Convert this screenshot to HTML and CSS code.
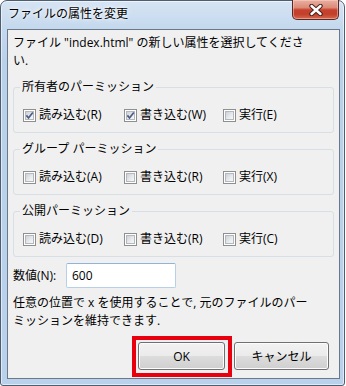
FILE: index.html
```html
<!DOCTYPE html>
<html lang="ja">
<head>
<meta charset="utf-8">
<title>ファイルの属性を変更</title>
<link rel="stylesheet" href="styles.css">
</head>
<body>
<div class="window">
  <div class="titlebar">
    <span class="title">ファイルの属性を変更</span>
    <button class="close" aria-label="閉じる">
      <svg width="14" height="12" viewBox="0 0 14 12">
        <path d="M2.5 2 L11.5 10 M11.5 2 L2.5 10" stroke="#4a2019" stroke-width="4.4" stroke-linecap="round" fill="none"/>
        <path d="M2.5 2 L11.5 10 M11.5 2 L2.5 10" stroke="#ffffff" stroke-width="2.4" stroke-linecap="round" fill="none"/>
      </svg>
    </button>
  </div>
  <div class="client">
    <p class="intro">ファイル "index.html" の新しい属性を選択してくださ<br>い.</p>

    <fieldset class="group">
      <legend>所有者のパーミッション</legend>
      <div class="row">
        <label class="cb"><span class="box"><svg width="9" height="9" viewBox="0 0 9 9"><path d="M1.4 4.4 L3.5 7 L7.8 1.4" stroke="#4b5d86" stroke-width="1.7" fill="none"/></svg></span>読み込む(R)</label>
        <label class="cb"><span class="box"><svg width="9" height="9" viewBox="0 0 9 9"><path d="M1.4 4.4 L3.5 7 L7.8 1.4" stroke="#4b5d86" stroke-width="1.7" fill="none"/></svg></span>書き込む(W)</label>
        <label class="cb"><span class="box"></span>実行(E)</label>
      </div>
    </fieldset>

    <fieldset class="group">
      <legend>グループ パーミッション</legend>
      <div class="row">
        <label class="cb"><span class="box"></span>読み込む(A)</label>
        <label class="cb"><span class="box"></span>書き込む(R)</label>
        <label class="cb"><span class="box"></span>実行(X)</label>
      </div>
    </fieldset>

    <fieldset class="group">
      <legend>公開パーミッション</legend>
      <div class="row">
        <label class="cb"><span class="box"></span>読み込む(D)</label>
        <label class="cb"><span class="box"></span>書き込む(R)</label>
        <label class="cb"><span class="box"></span>実行(C)</label>
      </div>
    </fieldset>

    <div class="num">
      <label class="num-label" for="num">数値(N):</label>
      <input id="num" class="num-input" type="text" value="600">
    </div>

    <p class="help">任意の位置で x を使用することで, 元のファイルのパー<br>ミッションを維持できます.</p>

    <div class="buttons">
      <button class="btn ok">OK</button>
      <button class="btn cancel">キャンセル</button>
    </div>
  </div>
</div>
</body>
</html>
```

FILE: styles.css
```css
body {
  margin: 0;
  background: #ffffff;
  font-family: "Open Sans", "Noto Sans CJK JP", sans-serif;
  font-size: 12px;
  color: #000;
}

.window {
  box-sizing: border-box;
  width: 345px;
  height: 386px;
  border: 1px solid #4f5d70;
  border-radius: 7px 7px 3px 3px;
  background: linear-gradient(180deg, #d6e4f3 0, #c5d9ee 26px, #bad1ea 60px, #b9d1ea 100%);
  box-shadow: inset 0 0 0 1px rgba(255, 255, 255, 0.55);
  display: flex;
  flex-direction: column;
}

.titlebar {
  flex: none;
  height: 28px;
  display: flex;
  align-items: flex-start;
  padding: 0 5px 0 7px;
}

.title {
  flex: 1;
  margin-top: 5px;
  line-height: 16px;
  text-shadow: 0 0 6px #fff, 0 0 3px #fff;
}

.close {
  box-sizing: border-box;
  margin-top: -1px;
  width: 47px;
  height: 20px;
  padding: 0;
  border: 1px solid #5a2820;
  border-top: none;
  border-radius: 0 0 5px 5px;
  background: linear-gradient(180deg, #eab0a2 0, #dc8a78 40%, #c6422c 52%, #c2402b 75%, #d7694f 100%);
  box-shadow: inset 0 0 0 1px rgba(255, 220, 210, 0.45);
  display: flex;
  align-items: center;
  justify-content: center;
}

.client {
  flex: 1;
  margin: 0 4px 6px 6px;
  border: 1px solid #6b7889;
  background: #f0f0f0;
  padding: 4px 5px 8px 5px;
  display: flex;
  flex-direction: column;
}

.intro,
.help {
  margin: 0;
  line-height: 18px;
  white-space: nowrap;
}

.group {
  margin: 9px 0 0;
  padding: 11px 9px 8px;
  border: 1px solid #d5dfe5;
  border-radius: 3px;
  min-width: 0;
}

.group + .group {
  margin-top: 8px;
}

.group legend {
  padding: 0 2px;
  margin-left: -3px;
  line-height: 16px;
}

.row {
  display: grid;
  grid-template-columns: 101px 99px auto;
  height: 18px;
  align-items: center;
}

.cb {
  display: flex;
  align-items: center;
  gap: 3px;
  line-height: 18px;
  white-space: nowrap;
}

.box {
  box-sizing: border-box;
  width: 13px;
  height: 13px;
  border: 1px solid #8e8f8f;
  background: #fff;
  padding: 1px;
  display: grid;
}

.box::before {
  content: "";
  grid-area: 1 / 1;
  border: 1px solid #b3b8be;
  background: linear-gradient(135deg, #cdd1d6 0, #e8e9eb 55%, #f8f8f8 100%);
}

.box svg {
  grid-area: 1 / 1;
  width: 9px;
  height: 9px;
}

.num {
  margin-top: 6px;
  display: grid;
  grid-template-columns: 53px 110px;
  align-items: center;
}

.num-label {
  line-height: 18px;
}

.num-input {
  box-sizing: border-box;
  width: 110px;
  height: 25px;
  margin: 0;
  padding: 0 5px;
  border: 1px solid #b7d0e8;
  border-top-color: #8fb3db;
  border-radius: 2px;
  background: #fff;
  font: inherit;
  color: #000;
  outline: none;
}

.help {
  margin-top: 6px;
}

.buttons {
  margin-top: 12px;
  display: flex;
  justify-content: flex-end;
  gap: 9px;
  padding-right: 5px;
}

.btn {
  box-sizing: border-box;
  height: 28px;
  padding: 0;
  border: 1px solid #707070;
  border-radius: 3px;
  background: linear-gradient(180deg, #f2f2f2 0, #ebebeb 50%, #dddddd 50%, #cfcfcf 100%);
  box-shadow: inset 0 0 0 1px #fcfcfc;
  font: inherit;
  color: #000;
}

.ok {
  width: 87px;
  position: relative;
}

.ok::after {
  content: "";
  position: absolute;
  left: -7px;
  top: -7px;
  right: -8px;
  bottom: -8px;
  border: 4px solid #e8000e;
  pointer-events: none;
}

.cancel {
  width: 95px;
}
```
